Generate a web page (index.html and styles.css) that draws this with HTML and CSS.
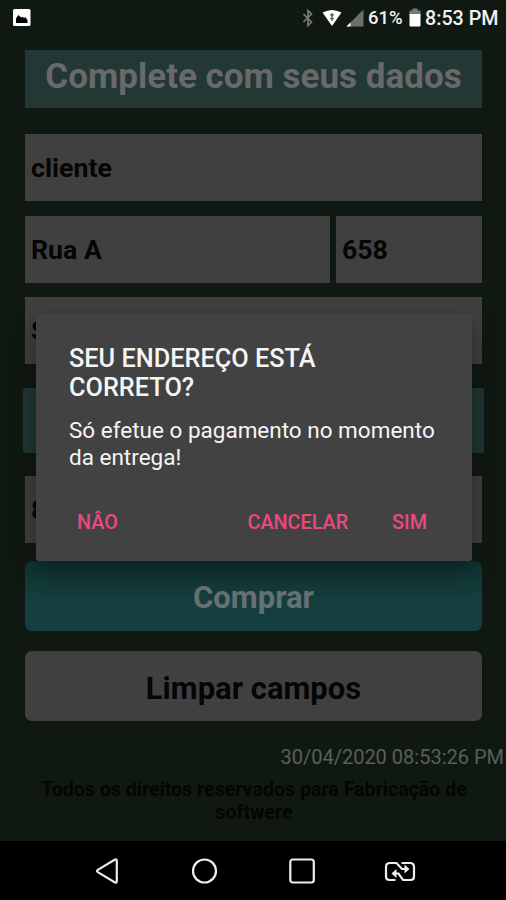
FILE: index.html
```html
<!DOCTYPE html>
<html lang="pt-BR">
<head>
    <meta charset="UTF-8">
    <meta name="viewport" content="width=device-width, initial-scale=1.0">
    <title>Complete com seus dados</title>
    <link rel="stylesheet" href="styles.css">
</head>
<body>
    <header class="status-bar">
        <svg class="status-photo" width="18" height="18" viewBox="0 0 18 18">
            <rect x="0" y="0" width="17.500" height="17" rx="1.500" fill="#fff"/>
            <path d="M3 14V9.500L5.500 6l2.500 2.500 1.500-.8 1.500 1.300 1.500-.7 2 2.700v3z" fill="#000"/>
        </svg>
        <div class="status-icons">
            <svg class="bluetooth" width="12" height="18" viewBox="0 0 12 18">
                <path d="M1.500 5l8 8L6 16.500V1.500L9.500 5l-8 8" fill="none" stroke="#777d78" stroke-width="1.700"/>
            </svg>
            <svg class="wifi" width="20" height="18" viewBox="0 0 20 18">
                <path d="M0.500 3.500Q10-1.500 19.500 3.500L10 17z" fill="#fff"/>
                <path d="M10 4v8M8.300 6h3.400M8.300 9.500h3.400" stroke="#555" stroke-width="1.300"/>
            </svg>
            <svg class="signal" width="18" height="18" viewBox="0 0 18 18">
                <path d="M0.500 17.500L17.500 0.500v17z" fill="#6c716d"/>
                <path d="M0.500 17.500l4-4v4z" fill="#fff"/>
            </svg>
            <span class="percent">61%</span>
            <svg class="battery" width="12" height="20" viewBox="0 0 12 20">
                <path d="M3.500 0.500h5v2h3v5h-11v-5h3z" fill="#777d78"/>
                <path d="M0.500 6h11v11.500q0 1-1 1h-9q-1 0-1-1z" fill="#fff"/>
            </svg>
            <span class="clock">8:53 PM</span>
        </div>
    </header>

    <main class="screen">
        <h1>Complete com seus dados</h1>
        <div class="field">cliente</div>
        <div class="row">
            <div class="field street">Rua A</div>
            <div class="field number">658</div>
        </div>
        <div class="field">S</div>
        <div class="select"></div>
        <div class="field phone">8</div>
        <button class="btn buy">Comprar</button>
        <button class="btn clear">Limpar campos</button>
        <p class="date">30/04/2020 08:53:26 PM</p>
        <p class="rights">Todos os direitos reservados para Fabricação de softwere</p>
    </main>

    <div class="dialog">
        <h2>SEU ENDEREÇO ESTÁ CORRETO?</h2>
        <p class="message">Só efetue o pagamento no momento da entrega!</p>
        <div class="actions">
            <button class="action no">NÂO</button>
            <button class="action cancel">CANCELAR</button>
            <button class="action yes">SIM</button>
        </div>
    </div>

    <nav class="nav-bar">
        <svg width="28" height="28" viewBox="0 0 28 28">
            <path d="M3.800 12.900L20.600 2.700q2.200-1 2.200 1.300v20q0 2.300-2.200 1.300L3.800 15.100q-1.600-1.100 0-2.200z"/>
        </svg>
        <svg width="28" height="28" viewBox="0 0 28 28">
            <circle cx="13.500" cy="14" r="11.500"/>
        </svg>
        <svg width="28" height="28" viewBox="0 0 28 28">
            <rect x="3.300" y="2.500" width="23.500" height="23" rx="2.500"/>
        </svg>
        <svg width="32" height="28" viewBox="0 0 32 28">
            <path d="M11.500 23H5.500Q2 23 2 19.500V10Q2 6 6 6h6.500l5.500 6h4"/>
            <path d="M17.500 6H26q4 0 4 4v9.500q0 3.500-3.500 3.500H19l-4.500-6.500H11"/>
            <path class="arrow" d="M20.500 7.500v9l5-4.500zM12.500 12v9L7.500 16.500z"/>
        </svg>
    </nav>
</body>
</html>
```

FILE: styles.css
```css
* {
    box-sizing: border-box;
}
body {
    margin: 0;
    width: 506px;
    height: 900px;
    overflow: hidden;
    position: relative;
    display: flex;
    flex-direction: column;
    background-color: #101911;
    font-family: Roboto, sans-serif;
}
h1, h2, p {
    margin: 0;
}
button {
    border: none;
    padding: 0;
    font-family: inherit;
}

/* Status bar */
.status-bar {
    height: 50px;
    padding: 8px 8px 0 13px;
    display: flex;
    justify-content: space-between;
    color: #f1f1f1;
    font-size: 19.7px;
    font-weight: 500;
}
.status-photo {
    margin-top: 1px;
}
.status-icons {
    display: flex;
    height: 20px;
    line-height: 21px;
}
.bluetooth {
    margin-top: 1px;
    margin-right: 8px;
}
.wifi {
    margin-top: 1px;
    margin-right: 4px;
}
.signal {
    margin-top: 1px;
    margin-right: 4px;
}
.percent {
    width: 41px;
    font-size: 18.5px;
}
.clock {
    width: 73px;
    margin-left: 4px;
    white-space: nowrap;
}

/* Form */
.screen {
    height: 791px;
    padding: 0 24px 0 25px;
    display: flex;
    flex-direction: column;
}
h1 {
    height: 58px;
    line-height: 53px;
    margin-bottom: 26px;
    background-color: #233735;
    color: #67696b;
    font-size: 35px;
    font-weight: bold;
    text-align: center;
    white-space: nowrap;
}
.field {
    flex: none;
    height: 67px;
    line-height: 69px;
    padding-left: 6px;
    margin-bottom: 15px;
    background-color: #404040;
    color: #050505;
    font-size: 26.7px;
    font-weight: bold;
}
.row {
    display: flex;
    gap: 6px;
    height: 67px;
    margin-bottom: 14px;
}
.street {
    width: 305px;
}
.number {
    flex: 1;
}
.select {
    flex: none;
    height: 65px;
    margin: 9px -2px 23px;
    border-radius: 3px;
    background-color: #203734;
}
.phone {
    margin-bottom: 18px;
}
.btn {
    height: 70px;
    flex: none;
    border-radius: 7px;
    font-size: 31px;
    font-weight: bold;
}
.buy {
    margin-bottom: 20px;
    padding-top: 3px;
    background: linear-gradient(#103331, #153f3f 60%);
    color: #657173;
}
.clear {
    padding-top: 4px;
    background-color: #404040;
    color: #050505;
}
.date {
    margin: 24px -22px 0 0;
    line-height: 24px;
    color: #586059;
    font-size: 20px;
    text-align: right;
}
.rights {
    margin: 9px -1px 0 0;
    line-height: 23px;
    color: #030603;
    font-size: 19.6px;
    font-weight: bold;
    text-align: center;
}

/* Confirm dialog */
.dialog {
    position: absolute;
    left: 36px;
    top: 314px;
    width: 436px;
    height: 247px;
    padding: 30px 35px 0 33px;
    border-radius: 3px;
    background-color: #424242;
    box-shadow: 0 8px 24px rgba(0, 0, 0, 0.4);
    color: #f5f5f5;
}
h2 {
    width: 270px;
    line-height: 29px;
    font-size: 25.3px;
    font-weight: 500;
}
.message {
    width: 368px;
    margin-top: 15px;
    line-height: 27px;
    font-size: 22.5px;
}
.actions {
    display: flex;
    margin-top: 39px;
    padding: 0 10px 0 8px;
}
.action {
    height: 24px;
    background: none;
    color: #ec4880;
    font-size: 19.8px;
    font-weight: 500;
}
.cancel {
    margin-left: auto;
    margin-right: 44px;
}

/* Navigation bar */
.nav-bar {
    flex: none;
    height: 59px;
    padding: 16px 0 0 94px;
    display: flex;
    gap: 68.5px;
    background-color: #000;
}
.nav-bar svg {
    fill: none;
    stroke: #ededed;
    stroke-width: 2.2;
}
.nav-bar .arrow {
    fill: #ededed;
    stroke: none;
}
```
